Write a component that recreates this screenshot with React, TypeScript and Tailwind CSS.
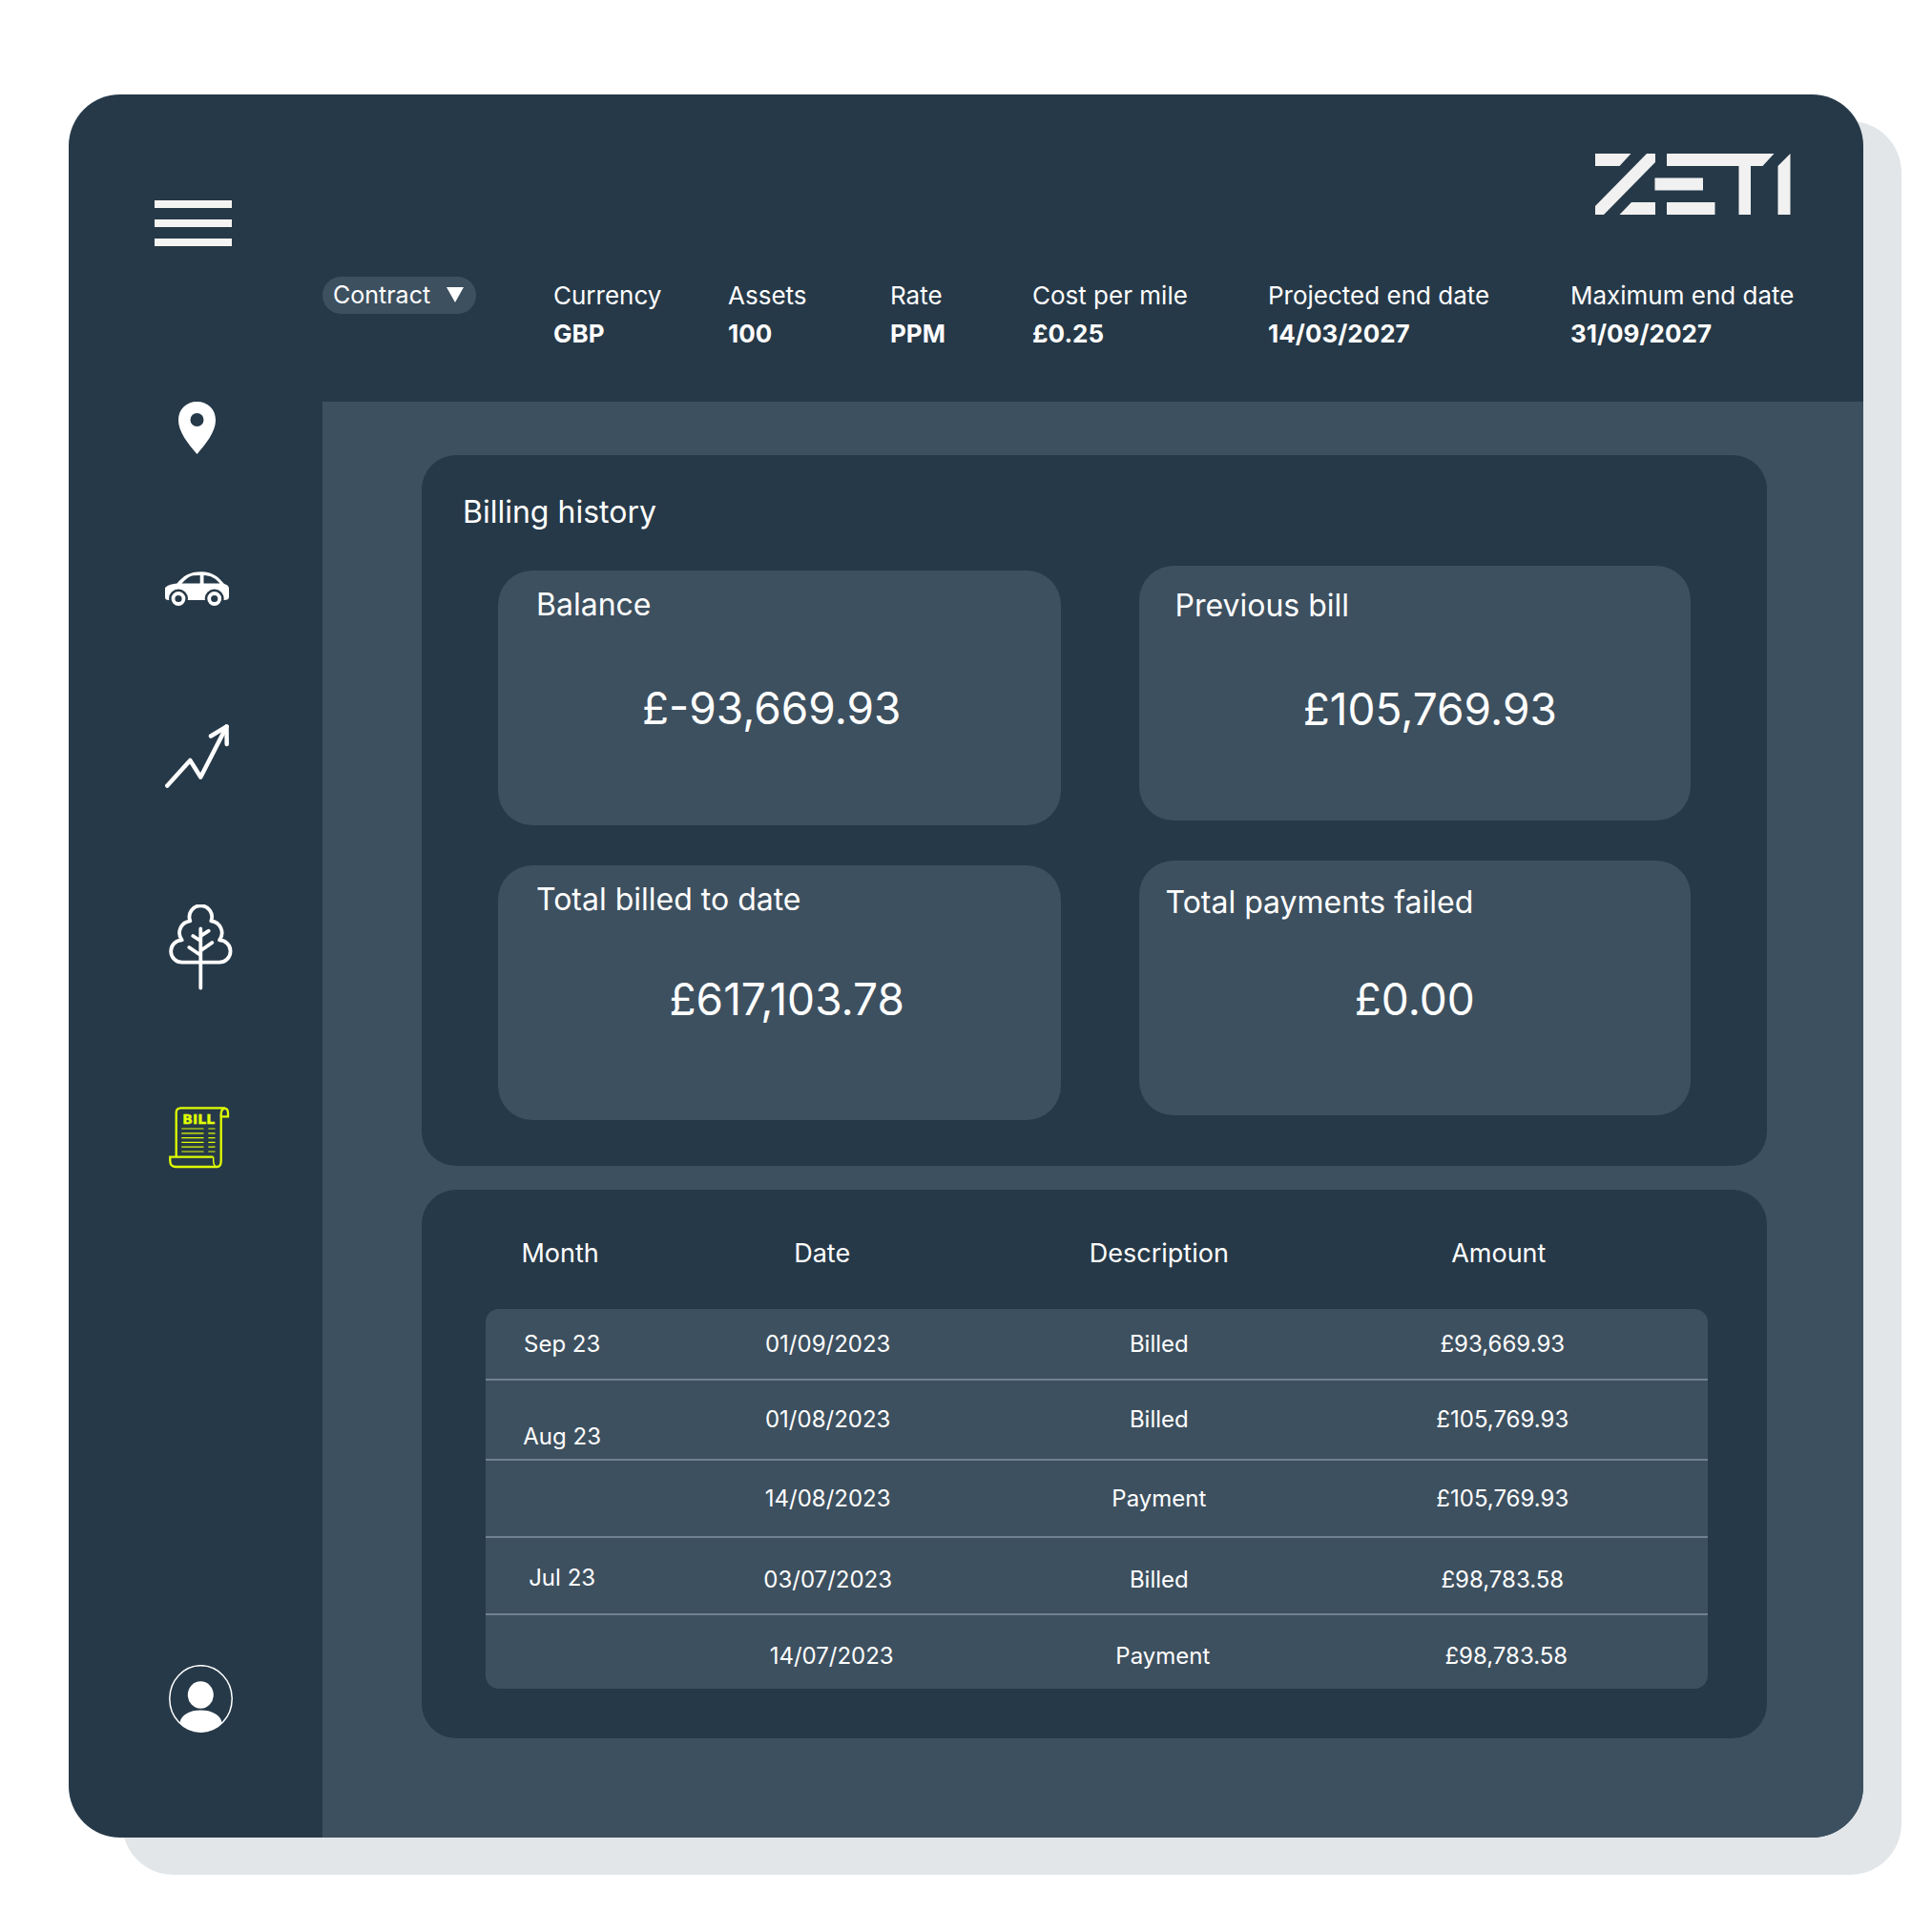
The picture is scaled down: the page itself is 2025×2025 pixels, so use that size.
import React from "react";

const metrics = [
  { label: "Currency", value: "GBP" },
  { label: "Assets", value: "100" },
  { label: "Rate", value: "PPM" },
  { label: "Cost per mile", value: "£0.25" },
  { label: "Projected end date", value: "14/03/2027" },
  { label: "Maximum end date", value: "31/09/2027" },
];

const columns = [
  { label: "Month", className: "w-[12.2%]" },
  { label: "Date", className: "w-[31.6%] pr-3" },
  { label: "Description", className: "w-[22.6%]" },
  { label: "Amount", className: "w-[33.6%] pr-2" },
];

const rows = [
  { month: "Sep 23", date: "01/09/2023", description: "Billed", amount: "£93,669.93", height: "h-[75px]", cell: "", monthCell: "pl-1" },
  { month: "Aug 23", date: "01/08/2023", description: "Billed", amount: "£105,769.93", height: "h-[84px]", cell: "", monthCell: "pl-1 pt-9" },
  { month: "", date: "14/08/2023", description: "Payment", amount: "£105,769.93", height: "h-[81px]", cell: "", monthCell: "" },
  { month: "Jul 23", date: "03/07/2023", description: "Billed", amount: "£98,783.58", height: "h-[81px]", cell: "pt-2", monthCell: "pl-1 pt-1" },
  { month: "", date: "14/07/2023", description: "Payment", amount: "£98,783.58", height: "h-[77px]", cell: "pt-2 pl-2", monthCell: "" },
];

function ZetiLogo() {
  return (
    <svg viewBox="0 0 205 64" className="h-16 w-[205px]" fill="#f1f1f1" role="img" aria-label="ZETI">
      <path d="M0 0H37.5L25.5 13H0Z" />
      <path d="M54 0H63V9L9 64H0V55Z" />
      <path d="M38 51H63V64H25.5Z" />
      <path d="M62.5 25.5H113V38.5H62.5Z" />
      <path d="M75 51H125.5V64H75Z" />
      <path d="M75 0H187.5L175.5 13H163V64H150.5V13H75Z" />
      <path d="M204.5 0V64H191.5V13Z" />
    </svg>
  );
}

function PinIcon() {
  return (
    <svg viewBox="0 0 67 56" className="h-14 w-[67px]" fill="#fff" fillRule="evenodd">
      <path d="M33.500 55C24 44 14 31.500 14 19.500C14 8 22 0 33.500 0S53 8 53 19.500C53 31.500 43 44 33.500 55ZM33.500 12A7 7 0 1 0 33.500 26A7 7 0 1 0 33.500 12Z" />
    </svg>
  );
}

function CarIcon() {
  return (
    <svg viewBox="0 0 67 38" className="h-[38px] w-[67px]">
      <path fill="#fff" d="M0 17C3 14 8 13 12.500 12.500C19 5 25 0.300 38 0.300C50 0.300 56 6 62 13C65 14 67 15 67 18V27C67 29 65 30 62 30H4C1 30 0 29 0 27Z" />
      <path fill="#263948" d="M17.500 12.500C21 9 25 4.500 30 4.200L36.700 4V12.500ZM40.500 4C48 4 53 7.500 57.500 12.500H40.500Z" />
      <circle cx="14" cy="28.500" r="10" fill="#263948" />
      <circle cx="51.700" cy="28.500" r="10" fill="#263948" />
      <circle cx="14" cy="28.500" r="5.500" fill="none" stroke="#fff" strokeWidth="3.800" />
      <circle cx="51.700" cy="28.500" r="5.500" fill="none" stroke="#fff" strokeWidth="3.800" />
    </svg>
  );
}

function TrendIcon() {
  return (
    <svg viewBox="0 0 67 67" className="h-[67px] w-[67px]" fill="none" stroke="#fff" strokeWidth="4.500" strokeLinecap="round" strokeLinejoin="round">
      <path d="M2.300 64.500L26.300 38L37.300 55.500L64.500 2.500" />
      <path d="M48 12.500L64.500 2.500L64.700 21" />
    </svg>
  );
}

function TreeIcon() {
  return (
    <svg viewBox="0 0 67 90" className="h-[90px] w-[67px]" fill="none" stroke="#fff" strokeWidth="3.800" strokeLinecap="round" strokeLinejoin="round">
      <path d="M14 60.700H52.700A11.700 11.700 0 0 0 53 37.300A12.500 12.500 0 0 0 44.300 17.300A11.800 11.800 0 1 0 22.300 17.300A12.500 12.500 0 0 0 13.700 37.300A11.700 11.700 0 0 0 14 60.700Z" />
      <path d="M33.300 25.500V87.500M25.300 33L33 38M41.700 27.700L34 32.700M21.300 45L33 53M45.300 40L34 48" />
    </svg>
  );
}

function BillIcon() {
  return (
    <svg viewBox="0 0 67 65" className="h-[65px] w-[67px]" fill="none" stroke="#e0ff00" strokeWidth="2.300">
      <path d="M7.700 52.500V6Q7.700 1.300 12.500 1.300H57Q62 1.300 62 6.500V10.300H54.700V56.500Q54.700 63 50.500 63H7.500Q1.300 63 1.300 57V52.700H46.500" />
      <path d="M59 1.500Q54.700 2 54.700 8V10.300" />
      <path d="M46.700 52.700V57Q47 63 50.700 63" strokeWidth="1.500" />
      <path d="M13.300 23H36.500M13.300 27.800H36.500M13.300 32.600H36.500M13.300 37.400H36.500M13.300 42.200H36.500M13.300 47H36.500M41.300 23H48.500M41.300 27.800H48.500M41.300 32.600H48.500M41.300 37.400H48.500M41.300 42.200H48.500M41.300 47H48.500" strokeWidth="1.200" />
      <text x="31.200" y="17.700" textAnchor="middle" fontFamily="DejaVu Sans, sans-serif" fontSize="14" fontWeight="700" fill="#e0ff00" stroke="#e0ff00" strokeWidth="0.400">
        BILL
      </text>
    </svg>
  );
}

function UserIcon() {
  return (
    <svg viewBox="0 0 67 72" className="h-[72px] w-[67px]" fill="#fff">
      <ellipse cx="33.500" cy="35.500" rx="32.700" ry="34.800" fill="none" stroke="#fff" strokeWidth="1.500" />
      <ellipse cx="33.300" cy="31.500" rx="13.500" ry="14.300" />
      <path d="M11.300 61C13 52 22 47.500 33.300 47.500S54 52 55.700 61A32.700 34.800 0 0 1 33.500 70.500A32.700 34.800 0 0 1 11.300 61Z" />
    </svg>
  );
}

function StatCard({ label, value, labelClass, valueClass }: { label: string; value: string; labelClass: string; valueClass: string }) {
  return (
    <article className="min-h-[267px] rounded-[36px] bg-[#3d505f]">
      <h3 className={`text-[32px] leading-10 ${labelClass}`}>{label}</h3>
      <p className={`text-center text-[46px] leading-14 ${valueClass}`}>{value}</p>
    </article>
  );
}

export default function App() {
  return (
    <div className="flex min-h-screen bg-white px-18 py-[99px] font-['Inter',sans-serif] text-white">
      <div className="relative isolate flex flex-1">
        <div className="absolute -right-10 -bottom-[39px] left-14 top-7 -z-10 rounded-[54px] bg-[#e2e6e9]" />
        <div className="flex flex-1 overflow-hidden rounded-[54px] bg-[#263948]">
          <aside className="flex w-[266px] shrink-0 flex-col items-start pb-[109px] pt-[111px]">
            <button type="button" aria-label="Open menu" className="ml-[90px] flex w-[81px] flex-col gap-3">
              <span className="h-2 w-full bg-[#f4f4f2]" />
              <span className="h-2 w-full bg-[#f4f4f2]" />
              <span className="h-2 w-full bg-[#f4f4f2]" />
            </button>
            <nav className="mt-[163px] flex flex-col gap-[122px] pl-[101px]">
              <a href="#locations" aria-label="Locations"><PinIcon /></a>
              <a href="#vehicles" aria-label="Vehicles"><CarIcon /></a>
              <a href="#performance" aria-label="Performance"><TrendIcon /></a>
              <a href="#emissions" aria-label="Emissions" className="pl-1"><TreeIcon /></a>
              <a href="#billing" aria-label="Billing" aria-current="page" className="pl-1"><BillIcon /></a>
            </nav>
            <a href="#account" aria-label="Account" className="ml-[105px] mt-auto"><UserIcon /></a>
          </aside>

          <div className="flex min-w-0 flex-1 flex-col">
            <header className="pb-[51px] pt-[62px]">
              <div className="flex justify-end pr-19">
                <ZetiLogo />
              </div>
              <div className="mt-[65px] grid grid-cols-[242fr_183fr_170fr_149fr_247fr_317fr_307fr] whitespace-nowrap">
                <div className="relative h-[39px] w-[161px]">
                  <select aria-label="Contract" className="h-full w-full appearance-none rounded-full bg-[#3d505f] pl-[11px] text-[25px] leading-[39px]">
                    <option>Contract</option>
                  </select>
                  <svg viewBox="0 0 18 16" className="pointer-events-none absolute right-[13px] top-[11px] h-4 w-[18px]" fill="#fff">
                    <path d="M0 0H18L9 16Z" />
                  </svg>
                </div>
                {metrics.map((m) => (
                  <dl key={m.label} className="min-w-0 text-[26px] leading-10">
                    <dt>{m.label}</dt>
                    <dd className="font-bold">{m.value}</dd>
                  </dl>
                ))}
              </div>
            </header>

            <main className="flex flex-1 flex-col gap-[25px] bg-[#3d505f] pb-[104px] pl-[104px] pr-[101px] pt-14">
              <section className="rounded-[36px] bg-[#263948] px-20 pb-12 pt-10">
                <h2 className="-ml-[37px] text-[32px] leading-10">Billing history</h2>
                <div className="mt-9 grid grid-cols-[588fr_577fr] gap-x-[82px]">
                  <div className="flex flex-col gap-[42px] pt-[5px]">
                    <StatCard label="Balance" value="£-93,669.93" labelClass="pl-10 pt-4" valueClass="mt-15 pr-4" />
                    <StatCard label="Total billed to date" value="£617,103.78" labelClass="pl-10 pt-4" valueClass="mt-14 pl-4" />
                  </div>
                  <div className="flex flex-col gap-[42px]">
                    <StatCard label="Previous bill" value="£105,769.93" labelClass="pl-[38px] pt-[22px]" valueClass="mt-15 pl-8" />
                    <StatCard label="Total payments failed" value="£0.00" labelClass="pl-7 pt-6" valueClass="mt-[53px]" />
                  </div>
                </div>
              </section>

              <section className="rounded-[36px] bg-[#263948] pb-[52px] pl-[67px] pr-[62px] pt-[10px]">
                <table className="w-full table-fixed border-separate border-spacing-0 text-center">
                  <thead>
                    <tr className="h-[115px] text-[27px]">
                      {columns.map((c) => (
                        <th key={c.label} scope="col" className={`font-normal ${c.className}`}>{c.label}</th>
                      ))}
                    </tr>
                  </thead>
                  <tbody className="text-[24px] leading-8 [&_td]:border-b-2 [&_td]:border-[#708291] [&_td]:bg-[#3d505f] [&_tr:first-child_td:first-child]:rounded-tl-[14px] [&_tr:first-child_td:last-child]:rounded-tr-[14px] [&_tr:last-child_td:first-child]:rounded-bl-[14px] [&_tr:last-child_td:last-child]:rounded-br-[14px] [&_tr:last-child_td]:border-b-0">
                    {rows.map((r) => (
                      <tr key={r.date} className={r.height}>
                        <td className={r.monthCell}>{r.month}</td>
                        <td className={r.cell}>{r.date}</td>
                        <td className={r.cell}>{r.description}</td>
                        <td className={r.cell}>{r.amount}</td>
                      </tr>
                    ))}
                  </tbody>
                </table>
              </section>
            </main>
          </div>
        </div>
      </div>
    </div>
  );
}
